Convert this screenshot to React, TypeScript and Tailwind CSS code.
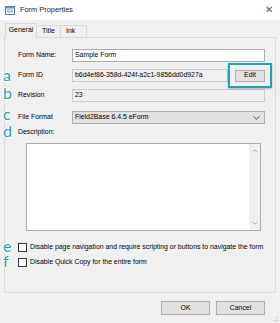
import React from "react";

const Mark = ({ ch, top }: { ch: string; top: number }) => (
  <span
    className="absolute -left-[2px] text-[16px] leading-none text-[#17a2b4] font-['Lato',sans-serif]"
    style={{ top, textShadow: "0 0 1px #fff, 0 0 1px #fff, 1px 0 0 #fff, -1px 0 0 #fff, 0 1px 0 #fff, 0 -1px 0 #fff" }}
  >
    {ch}
  </span>
);

export default function App() {
  return (
    <div className="relative w-[280px] h-[323px] bg-[#f0f0f0] font-['Liberation_Sans',Arial,sans-serif] text-[6.9px] text-[#000] overflow-hidden">
      {/* title bar */}
      <div className="h-[20px] bg-white flex items-center pl-[5px] pr-[7px]">
        <svg width="10" height="9" viewBox="0 0 10 9" className="mr-[5px]">
          <rect x="0.5" y="0.5" width="9" height="8" fill="#fff" stroke="#5a7fb5" />
          <rect x="1" y="1" width="8" height="1.5" fill="#6a8fc6" />
          <rect x="2" y="3.5" width="6" height="1" fill="#7f9bc7" />
          <rect x="2" y="5.5" width="6" height="1" fill="#7f9bc7" />
        </svg>
        <span className="text-[7.4px] text-[#222]">Form Properties</span>
        <span className="ml-auto text-[10px] text-[#555] leading-none">✕</span>
      </div>

      {/* tabs */}
      <div className="flex items-end h-[15px] mt-[2px] pl-[5px]">
        <div className="h-[15px] w-[32px] border border-b-0 border-[#d9d9d9] bg-[#f0f0f0] flex items-center justify-center relative z-10 -mb-px pb-[2px]">
          General
        </div>
        <div className="h-[12px] w-[24px] border border-l-0 border-b-0 border-[#d9d9d9] bg-[#f0f0f0] flex items-center justify-center">
          Title
        </div>
        <div className="h-[12px] w-[26px] border border-l-0 border-b-0 border-[#d9d9d9] bg-[#f0f0f0] flex items-center pl-[5px]">
          Ink
        </div>
      </div>

      {/* panel */}
      <div className="relative mx-[4px] h-[256px] border border-[#d9d9d9] bg-[#f0f0f0] pt-[11px] pl-[12px] pr-[10px] flex flex-col">
        <div className="flex items-center h-[13px]">
          <span className="w-[55px] pl-[1px]">Form Name:</span>
          <div className="flex-1 h-[13px] bg-white border border-[#adadad] flex items-center pl-[2px]">Sample Form</div>
        </div>

        <div className="flex items-center h-[13px] mt-[7px]">
          <span className="w-[55px] pl-[1px]">Form ID</span>
          <div className="w-[156px] h-[13px] bg-[#f0f0f0] border border-[#cccccc] flex items-center pl-[2px]">
            b6d4ef86-358d-424f-a2c1-9856dd0d927a
          </div>
          <div className="relative ml-auto">
            <div className="w-[30px] h-[12px] bg-[#e1e1e1] border border-[#adadad] flex items-center justify-center">Edit</div>
            <div className="absolute -left-[7px] -right-[7px] -top-[7px] -bottom-[6px] border-2 border-[#1aa5b3] shadow-[0_1px_2px_rgba(0,0,0,0.25)]" />
          </div>
        </div>

        <div className="flex items-center h-[13px] mt-[7px]">
          <span className="w-[55px] pl-[1px]">Revision</span>
          <div className="flex-1 h-[13px] bg-[#f0f0f0] border border-[#cccccc] flex items-center pl-[2px]">23</div>
        </div>

        <div className="flex items-center h-[13px] mt-[9px]">
          <span className="w-[55px] pl-[1px]">File Format</span>
          <div className="flex-1 h-[13px] bg-[#e1e1e1] border border-[#adadad] flex items-center pl-[2px] pr-[4px]">
            <span>Field2Base 6.4.5 eForm</span>
            <svg width="7" height="4" viewBox="0 0 7 4" className="ml-auto">
              <path d="M0.5 0.5 L3.5 3.3 L6.5 0.5" fill="none" stroke="#444" strokeWidth="0.9" />
            </svg>
          </div>
        </div>

        <div className="h-[9px] mt-[4px] flex items-center pl-[1px]">Description:</div>

        <div className="ml-[9px] mr-[4px] mt-[6px] h-[88px] bg-white border border-[#acacac] flex justify-end">
          <div className="w-[11px] bg-[#f0f0f0] flex flex-col items-center justify-between py-[5px]">
            <svg width="6" height="4" viewBox="0 0 6 4">
              <path d="M0.5 3.2 L3 0.8 L5.5 3.2" fill="none" stroke="#a0a0a0" strokeWidth="0.9" />
            </svg>
            <svg width="6" height="4" viewBox="0 0 6 4">
              <path d="M0.5 0.8 L3 3.2 L5.5 0.8" fill="none" stroke="#a0a0a0" strokeWidth="0.9" />
            </svg>
          </div>
        </div>

        <div className="flex items-center mt-[12px] h-[9px]">
          <div className="w-[9px] h-[9px] border border-[#333] bg-white ml-[1px] mr-[3px]" />
          <span>Disable page navigation and require scripting or buttons to navigate the form</span>
        </div>
        <div className="flex items-center mt-[6px] h-[9px]">
          <div className="w-[9px] h-[9px] border border-[#333] bg-white ml-[1px] mr-[3px]" />
          <span>Disable Quick Copy for the entire form</span>
        </div>

        <Mark ch="a" top={29} />
        <Mark ch="b" top={47} />
        <Mark ch="c" top={68} />
        <Mark ch="d" top={85} />
        <Mark ch="e" top={200} />
        <Mark ch="f" top={215} />
      </div>

      {/* buttons */}
      <div className="flex justify-end gap-[6px] pr-[15px] mt-[8px]">
        <div className="w-[49px] h-[14px] bg-[#e1e1e1] border border-[#adadad] flex items-center justify-center">OK</div>
        <div className="w-[49px] h-[14px] bg-[#e1e1e1] border border-[#adadad] flex items-center justify-center">Cancel</div>
      </div>

      {/* resize grip */}
      <svg width="6" height="6" viewBox="0 0 6 6" className="absolute right-[1px] bottom-[1px]">
        <rect x="4" y="0" width="1" height="1" fill="#bbb" />
        <rect x="2" y="2" width="1" height="1" fill="#bbb" />
        <rect x="4" y="2" width="1" height="1" fill="#bbb" />
        <rect x="0" y="4" width="1" height="1" fill="#bbb" />
        <rect x="2" y="4" width="1" height="1" fill="#bbb" />
        <rect x="4" y="4" width="1" height="1" fill="#bbb" />
      </svg>
    </div>
  );
}
